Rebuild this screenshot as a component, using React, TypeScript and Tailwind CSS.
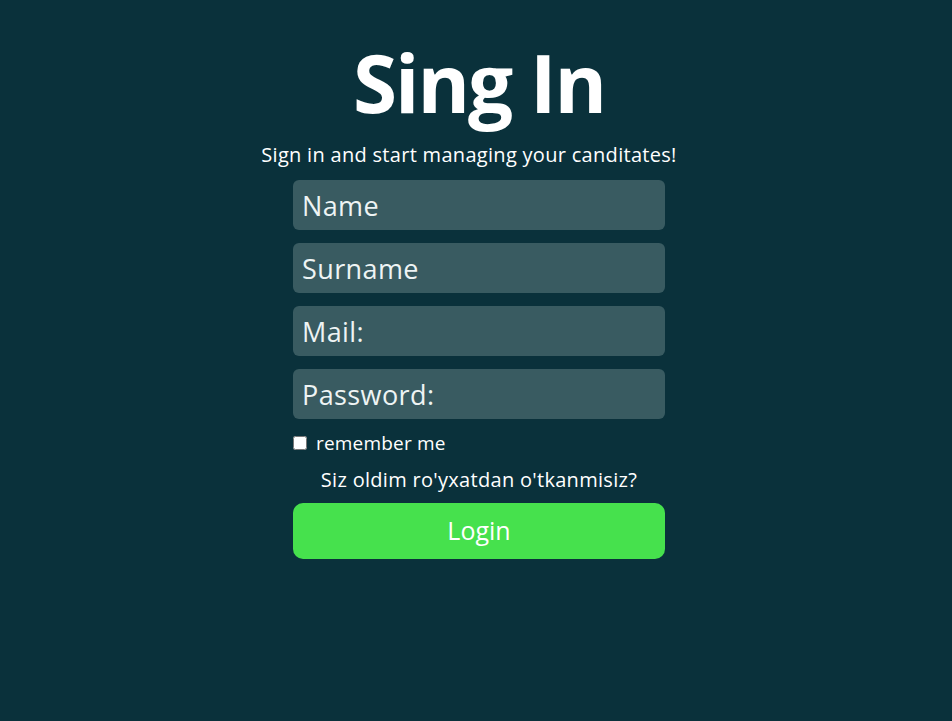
export default function App() {
  const fields = ["Name", "Surname", "Mail:", "Password:"];
  return (
    <div className="min-h-[721px] w-full bg-[#0a313b] flex flex-col items-center text-white font-['Open_Sans','Noto_Sans',sans-serif]">
      <div className="ml-[6px] flex flex-col items-center">
        <h1 className="mt-[34px] text-[80px] leading-[96px] font-bold tracking-[-2px]">Sing In</h1>
        <p className="-ml-[20px] mt-[12px] text-[20px] leading-[26px] tracking-[0.3px]">Sign in and start managing your canditates!</p>
        <form className="mt-[12px] w-[372px] flex flex-col gap-[13px]">
          {fields.map((f) => (
            <input
              key={f}
              placeholder={f}
              className="h-[50px] w-full rounded-[6px] bg-[#395b61] px-[9px] text-[27px] tracking-[0.4px] text-white placeholder:text-[#eef4f4] outline-none"
            />
          ))}
          <label className="flex items-center gap-[9px] text-[19px] leading-[24px] tracking-[0.2px] -mt-[1px]">
            <input type="checkbox" className="w-[14px] h-[14px]" />
            remember me
          </label>
          <p className="text-center text-[20px] leading-[26px] tracking-[0.3px] -mt-[1px]">Siz oldim ro'yxatdan o'tkanmisiz?</p>
          <button type="button" className="-mt-[3px] h-[56px] w-full rounded-[10px] bg-[#46e14d] text-[25px] text-white">
            Login
          </button>
        </form>
      </div>
    </div>
  );
}
